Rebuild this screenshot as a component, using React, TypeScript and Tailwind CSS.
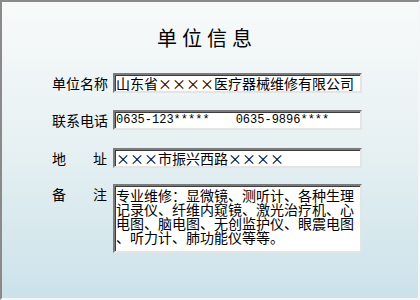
import React from "react";

const X = () => <span className="inline-block w-[14px] text-center">×</span>;

const cjk = { fontFamily: '"Noto Sans CJK SC", "Noto Sans", sans-serif' } as React.CSSProperties;

const field =
  "ml-[5px] w-[249px] border-2 border-t-[#7b7b7b] border-l-[#7b7b7b] border-r-[#e4e4e4] border-b-[#e4e4e4] bg-white shadow-[inset_1px_1px_0_#3c3c3c] pl-[1px]";

export default function App() {
  return (
    <div
      className="w-[420px] h-[300px] bg-gradient-to-b from-[#f8fafa] via-[#e6f0f2] to-[#cbe2ea] border-t-2 border-l-2 border-t-[#8a8a8a] border-l-[#8a8a8a] border-r-2 border-b-2 border-r-[#f4f7f8] border-b-[#f4f7f8] text-black text-[14px] leading-[14px]"
      style={cjk}
    >
      <div className="pt-[25px] pl-[155px] text-[20px] leading-[22px] tracking-[5px]">单位信息</div>
      <div className="pl-[50px]">
        <div className="flex items-center mt-[24px]">
          <div className="w-[56px]">单位名称</div>
          <div className={field + " h-[20px] flex items-center whitespace-nowrap"}>
            山东省<X />
            <X />
            <X />
            <X />医疗器械维修有限公司
          </div>
        </div>
        <div className="flex items-center mt-[17px]">
          <div className="w-[56px]">联系电话</div>
          <div
            className={field + " h-[20px] flex items-center whitespace-pre text-[12px]"}
            style={{ fontFamily: '"Liberation Mono", monospace' }}
          >
            <span>0635-123*****</span>
            <span className="ml-[26px]">0635-9896****</span>
          </div>
        </div>
        <div className="flex items-center mt-[18px]">
          <div className="w-[56px] flex justify-between pr-[1px]">
            <span>地</span>
            <span>址</span>
          </div>
          <div className={field + " h-[20px] flex items-center whitespace-nowrap"}>
            <X />
            <X />
            <X />市振兴西路<X />
            <X />
            <X />
            <X />
          </div>
        </div>
        <div className="flex items-start mt-[16px]">
          <div className="w-[56px] flex justify-between pr-[1px] pt-[3px]">
            <span>备</span>
            <span>注</span>
          </div>
          <div className={field + " h-[69px] pt-[2px] whitespace-nowrap"}>
            <div>专业维修：显微镜、测听计、各种生理</div>
            <div>记录仪、纤维内窥镜、激光治疗机、心</div>
            <div>电图、脑电图、无创监护仪、眼震电图</div>
            <div>、听力计、肺功能仪等等。</div>
          </div>
        </div>
      </div>
    </div>
  );
}
